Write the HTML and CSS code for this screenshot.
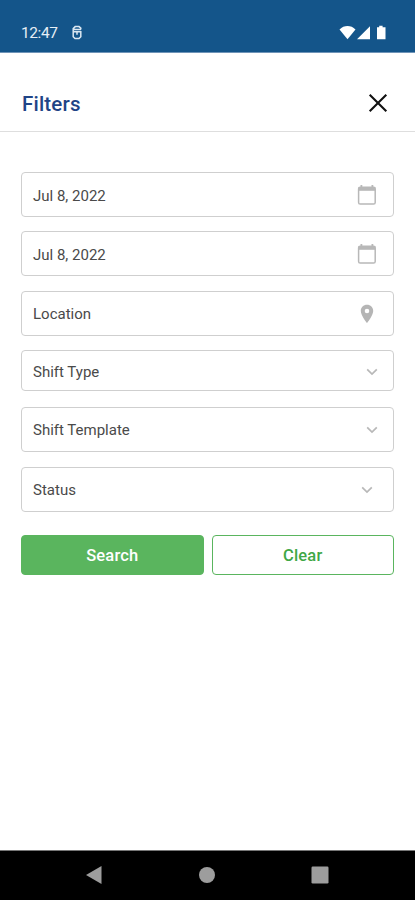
FILE: index.html
```html
<!DOCTYPE html>
<html lang="en">
<head>
<meta charset="utf-8">
<title>Filters</title>
<link rel="stylesheet" href="styles.css">
</head>
<body>
<div class="screen">
  <div class="statusbar">
    <span class="time">12:47</span>
    <svg class="app-icon" width="12" height="16" viewBox="0 0 12 16" fill="none" stroke="#dbe7f1" stroke-width="1.5"><path d="M9.8 4.6V3.2L8 1.6H4.2L2.2 3.6V6.8H9.8V11.8L8 13.6H4L2.2 11.8V6.8M2.2 4.4H10M6 7V9.8"/></svg>
    <svg class="system-icons" width="50" height="16" viewBox="0 0 50 16" fill="#fff"><path d="M0.5 4.4C5-.2 12-.2 16.5 4.4L8.5 14.3Z"/><path d="M18 14.3L31 1.3V14.3Z"/><path d="M38 2.2H40.2V.8H43.6V2.2H46.5V14.3H38Z"/></svg>
  </div>
  <header class="header">
    <h1 class="title">Filters</h1>
    <svg class="close" width="20" height="20" viewBox="0 0 20 20" fill="none" stroke="#111" stroke-width="2.1"><path d="M1.7 1.7L18.3 18.3M18.3 1.7L1.7 18.3"/></svg>
  </header>
  <main class="form">
    <div class="field">
      <span class="label date">Jul 8, 2022</span>
      <svg width="20" height="22" viewBox="0 0 20 22" fill="none" stroke="#b8b8b8" stroke-width="1.5"><rect x="1.6" y="3.2" width="16.6" height="16.8" rx="1.6"/><path d="M1.6 4.9H18.2" stroke-width="3.8"/><path d="M4.4 1V4M15.4 1V4" stroke-width="1.8"/></svg>
    </div>
    <div class="field second">
      <span class="label date">Jul 8, 2022</span>
      <svg width="20" height="22" viewBox="0 0 20 22" fill="none" stroke="#b8b8b8" stroke-width="1.5"><rect x="1.6" y="3.2" width="16.6" height="16.8" rx="1.6"/><path d="M1.6 4.9H18.2" stroke-width="3.8"/><path d="M4.4 1V4M15.4 1V4" stroke-width="1.8"/></svg>
    </div>
    <div class="field location">
      <span class="label">Location</span>
      <svg width="20" height="20" viewBox="0 0 20 20" fill="#b5b5b5"><path fill-rule="evenodd" d="M10 .8C6.4 .8 3.8 3.4 3.8 6.9C3.8 11.4 10 19 10 19S16.2 11.4 16.2 6.9C16.2 3.4 13.6 .8 10 .8ZM10 4.7A2.3 2.3 0 1 1 10 9.3A2.3 2.3 0 1 1 10 4.7Z"/></svg>
    </div>
    <div class="field type">
      <span class="label">Shift Type</span>
      <svg class="chevron" width="12" height="8" viewBox="0 0 12 8" fill="none" stroke="#b8b8b8" stroke-width="1.7"><path d="M1.2 1.3L6 6.1L10.8 1.3"/></svg>
    </div>
    <div class="field template">
      <span class="label">Shift Template</span>
      <svg class="chevron" width="12" height="8" viewBox="0 0 12 8" fill="none" stroke="#b8b8b8" stroke-width="1.7"><path d="M1.2 1.3L6 6.1L10.8 1.3"/></svg>
    </div>
    <div class="field status">
      <span class="label">Status</span>
      <svg class="chevron" width="12" height="8" viewBox="0 0 12 8" fill="none" stroke="#b8b8b8" stroke-width="1.7"><path d="M1.2 1.3L6 6.1L10.8 1.3"/></svg>
    </div>
    <div class="actions">
      <button class="button search">Search</button>
      <button class="button clear">Clear</button>
    </div>
  </main>
  <nav class="navbar">
    <svg width="18" height="20" viewBox="0 0 18 20" fill="#9d9d9d"><path d="M1 10L16.5 1V19Z"/></svg>
    <svg width="18" height="18" viewBox="0 0 18 18" fill="#9d9d9d"><circle cx="9" cy="9" r="8"/></svg>
    <svg width="18" height="18" viewBox="0 0 18 18" fill="#9d9d9d"><rect x=".5" y=".5" width="17" height="17" rx="1.2"/></svg>
  </nav>
</div>
</body>
</html>
```
FILE: styles.css
```css
* {
  box-sizing: border-box;
}

body {
  margin: 0;
  font-family: Roboto, "Liberation Sans", sans-serif;
  background: #fff;
}

svg {
  display: block;
  flex: none;
}

.screen {
  display: flex;
  flex-direction: column;
  height: 900px;
}

.statusbar {
  display: flex;
  align-items: center;
  height: 53px;
  padding: 13px 26px 0 21px;
  background: #14558a;
  border-bottom: 1px solid #6f94b8;
}

.time {
  width: 50px;
  font-size: 15.5px;
  letter-spacing: -0.4px;
  color: #e6eef5;
}

.system-icons {
  margin-left: auto;
}

.header {
  display: flex;
  align-items: center;
  justify-content: space-between;
  height: 79px;
  padding: 22px 27px 0 22px;
  border-bottom: 1px solid #dedede;
}

.title {
  margin: 0;
  padding-top: 1px;
  font-size: 20.5px;
  font-weight: 500;
  letter-spacing: 0.2px;
  color: #1f4486;
}

.form {
  flex: 1;
  padding: 40px 21px 0;
}

.field {
  display: flex;
  align-items: center;
  justify-content: space-between;
  height: 45px;
  padding: 1px 16px 0 11px;
  border: 1px solid #cfcfcf;
  border-radius: 4px;
}

.second {
  margin-top: 14px;
}

.location,
.status {
  margin-top: 15px;
}

.location {
  padding-top: 0;
}

.type {
  height: 41px;
  margin-top: 14px;
  padding-top: 2px;
  padding-right: 15px;
}

.template {
  margin-top: 16px;
  padding-right: 15px;
}

.status .chevron {
  margin-right: 4px;
}

.label {
  font-size: 15px;
  letter-spacing: 0;
  color: #4a4a4a;
}

.date {
  padding-top: 1px;
}

.actions {
  display: grid;
  grid-template-columns: 1fr 1fr;
  gap: 8px;
  margin-top: 23px;
}

.button {
  height: 40px;
  padding: 0;
  border: 1px solid #5ab55e;
  border-radius: 4px;
  font-family: inherit;
  font-size: 16.5px;
  font-weight: 500;
  letter-spacing: 0.15px;
}

.search {
  background: #5ab55e;
  color: #fff;
}

.clear {
  background: #fff;
  color: #3fa746;
}

.navbar {
  display: flex;
  align-items: center;
  justify-content: space-between;
  height: 50px;
  padding: 0 86px 1px 85px;
  border-top: 1px solid #777;
  background: #000;
}
```
